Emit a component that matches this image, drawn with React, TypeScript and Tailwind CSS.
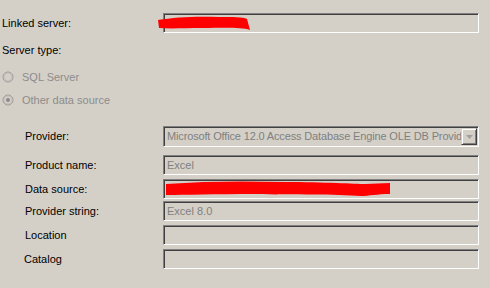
import React from 'react';

const Field = ({ children, className = '' }: { children?: React.ReactNode; className?: string }) => (
  <div
    className={`relative flex items-center overflow-hidden border border-t-[#808080] border-l-[#808080] border-b-white border-r-white bg-[#d4d0c8] pl-[3px] text-[#808080] shadow-[inset_1px_1px_0_#404040] ${className}`}
  >
    {children}
  </div>
);

const Radio = ({ checked }: { checked?: boolean }) => (
  <svg width="12" height="12" viewBox="0 0 12 12" className="shrink-0">
    <circle cx="6" cy="6" r="5" fill="#d4d0c8" stroke="#9a9a9a" strokeWidth="1" />
    <circle cx="6" cy="6" r="4" fill="none" stroke="#c4c0b8" strokeWidth="1" />
    {checked && <circle cx="6" cy="6" r="2" fill="#8a8a8a" />}
  </svg>
);

const Scribble = ({ width, height, d }: { width: number; height: number; d: string }) => (
  <svg width={width} height={height} viewBox={`0 0 ${width} ${height}`} className="absolute left-0 top-0">
    <path d={d} fill="#ff0000" />
  </svg>
);

const rows = [
  { label: 'Provider:', top: 'mt-[19px]', h: 'h-[21px]' },
  { label: 'Product name:', top: 'mt-[8px]', h: 'h-[20px]', value: 'Excel' },
  { label: 'Data source:', top: 'mt-[4px]', h: 'h-[20px]', scribble: true },
  { label: 'Provider string:', top: 'mt-[2px]', h: 'h-[20px]', value: 'Excel 8.0' },
  { label: 'Location', top: 'mt-[4px]', h: 'h-[20px]' },
  { label: 'Catalog', top: 'mt-[4px]', h: 'h-[20px]' },
];

export default function App() {
  return (
    <div className="h-[288px] w-[490px] overflow-hidden bg-[#d4d0c8] font-['Liberation_Sans',Arial,sans-serif] text-[11px] text-black">
      <div className="mt-[13px] flex h-[20px] items-center">
        <span className="w-[163px] pl-[2px]">Linked server:</span>
        <div className="relative">
          <Field className="h-[20px] w-[316px]" />
          <div className="absolute left-[-6px] top-[3px]">
            <Scribble
              width={94}
              height={15}
              d="M1 4 C18 1 40 0 62 1 C76 1 86 1 90 3 L93 14 C84 11 66 12 46 12 C28 12 14 13 2 12 Z"
            />
          </div>
        </div>
      </div>

      <div className="mt-[10px] flex h-[14px] items-center pl-[2px]">Server type:</div>

      <div className="mt-[13px] flex h-[14px] items-center gap-[8px] pl-[2px] text-[#8c8c8c]">
        <Radio />
        <span>SQL Server</span>
      </div>

      <div className="mt-[9px] flex h-[14px] items-center gap-[8px] pl-[2px] text-[#8c8c8c]">
        <Radio checked />
        <span>Other data source</span>
      </div>

      {rows.map((row, i) => (
        <div key={row.label} className={`flex items-center ${row.top} ${row.h}`}>
          <span className={`w-[163px] ${row.label === 'Catalog' ? 'pl-[24px]' : 'pl-[25px]'}`}>{row.label}</span>
          {i === 0 ? (
            <Field className="h-[21px] w-[316px]">
              <span className="whitespace-nowrap tracking-[-0.15px]">
                Microsoft Office 12.0 Access Database Engine OLE DB Provider
              </span>
              <div className="absolute right-[1px] top-[1px] flex h-[17px] w-[16px] items-center justify-center border border-t-[#d4d0c8] border-l-[#d4d0c8] border-b-[#404040] border-r-[#404040] bg-[#d4d0c8] shadow-[inset_1px_1px_0_#ffffff,inset_-1px_-1px_0_#808080]">
                <svg width="7" height="4" viewBox="0 0 7 4">
                  <path d="M0 0 H7 L3.5 4 Z" fill="#a0a0a0" />
                </svg>
              </div>
            </Field>
          ) : (
            <div className="relative">
              <Field className="h-[20px] w-[316px]">{row.value}</Field>
              {row.scribble && (
                <div className="absolute left-[2px] top-[2px]">
                  <Scribble
                    width={226}
                    height={16}
                    d="M1 3 C40 0 80 0 120 1 C160 1 190 3 200 3 L225 2 L225 13 C212 13 204 15 196 15 C170 13 130 14 90 13 C50 13 20 14 1 14 Z"
                  />
                </div>
              )}
            </div>
          )}
        </div>
      ))}
    </div>
  );
}
